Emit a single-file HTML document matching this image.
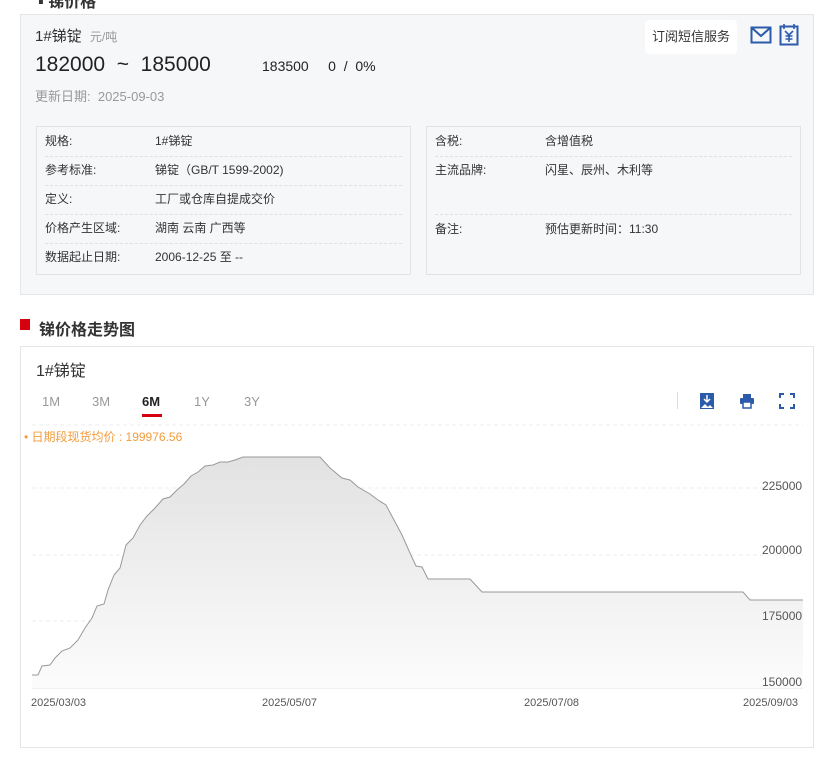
<!DOCTYPE html>
<html><head><meta charset="utf-8"><style>
body{margin:0;width:822px;height:759px;background:#fff;font-family:"Liberation Sans","Noto Sans CJK SC",sans-serif;position:relative;overflow:hidden;color:#333}
.a{position:absolute;white-space:nowrap}
.box1{position:absolute;left:20px;top:14px;width:794px;height:281px;background:#f6f7f9;border:1px solid #e5e5e5;box-sizing:border-box}
.tb{position:absolute;background:#f6f7f9;border:1px solid #e3e3e3;box-sizing:border-box}
.row{position:absolute;left:8px;right:8px;height:29px;border-bottom:1px dashed #e0e0e0;font-size:12px;line-height:29px}
.row span{position:absolute}
.box2{position:absolute;left:20px;top:346px;width:794px;height:402px;border:1px solid #e5e5e5;box-sizing:border-box;background:#fff}
</style></head><body>
<div class="a" style="left:38px;top:-12px;font-size:16px;font-weight:bold">▪ 锑价格</div>
<div class="box1">
 <div class="a" style="left:14px;top:10px;font-size:15px;color:#333">1#锑锭 <span style="font-size:12px;color:#999;margin-left:4px">元/吨</span></div>
 <div class="a" style="left:14px;top:38px;font-size:21px;color:#222">182000 &nbsp;~&nbsp; 185000</div>
 <div class="a" style="left:241px;top:43px;font-size:14px;color:#222">183500 &nbsp;&nbsp;&nbsp; 0 &nbsp;/&nbsp; 0%</div>
 <div class="a" style="left:14px;top:71px;font-size:13px;color:#999">更新日期: &nbsp;2025-09-03</div>
 <div class="a" style="left:624px;top:5px;width:92px;height:34px;background:#fff;border-radius:4px;font-size:13px;line-height:34px;text-align:center;color:#333">订阅短信服务</div>
 <svg class="a" style="left:729px;top:10px" width="22" height="20"><rect x="1.5" y="2.5" width="19" height="15" fill="none" stroke="#2c5bab" stroke-width="2"/><path d="M2 3l9 8 9-8" fill="none" stroke="#2c5bab" stroke-width="2"/></svg>
 <svg class="a" style="left:758px;top:8px" width="20" height="24"><rect x="1.5" y="3.5" width="17" height="18" fill="none" stroke="#2c5bab" stroke-width="2"/><path d="M5 1v5M15 1v5M6 8l4 4 4-4M10 12v7M6.5 13h7M6.5 16h7" stroke="#2c5bab" stroke-width="1.6" fill="none"/></svg>
 <div class="tb" style="left:15px;top:111px;width:375px;height:149px">
  <div class="row" style="top:0"><span style="left:0">规格:</span><span style="left:110px">1#锑锭</span></div>
  <div class="row" style="top:29px"><span style="left:0">参考标准:</span><span style="left:110px">锑锭（GB/T 1599-2002)</span></div>
  <div class="row" style="top:58px"><span style="left:0">定义:</span><span style="left:110px">工厂或仓库自提成交价</span></div>
  <div class="row" style="top:87px"><span style="left:0">价格产生区域:</span><span style="left:110px">湖南 云南 广西等</span></div>
  <div class="row" style="top:116px;border:none"><span style="left:0">数据起止日期:</span><span style="left:110px">2006-12-25 至 --</span></div>
 </div>
 <div class="tb" style="left:405px;top:111px;width:375px;height:149px">
  <div class="row" style="top:0"><span style="left:0">含税:</span><span style="left:110px">含增值税</span></div>
  <div class="row" style="top:29px;height:58px"><span style="left:0">主流品牌:</span><span style="left:110px">闪星、辰州、木利等</span></div>
  <div class="row" style="top:88px;border:none"><span style="left:0">备注:</span><span style="left:110px">预估更新时间：11:30</span></div>
 </div>
</div>
<div class="a" style="left:20px;top:319px;width:10px;height:11px;background:#d7000f"></div>
<div class="a" style="left:39px;top:316px;font-size:16px;font-weight:bold;color:#333">锑价格走势图</div>
<div class="box2">
 <div class="a" style="left:15px;top:10px;font-size:16px;color:#333">1#锑锭</div>
 <div class="a" style="left:21px;top:47px;font-size:13px;color:#999">1M</div>
 <div class="a" style="left:71px;top:47px;font-size:13px;color:#999">3M</div>
 <div class="a" style="left:121px;top:47px;font-size:13px;color:#222;font-weight:bold">6M</div>
 <div class="a" style="left:121px;top:67px;width:20px;height:3px;background:#d7000f"></div>
 <div class="a" style="left:173px;top:47px;font-size:13px;color:#999">1Y</div>
 <div class="a" style="left:223px;top:47px;font-size:13px;color:#999">3Y</div>
 <div class="a" style="left:656px;top:45px;width:1px;height:17px;background:#ddd"></div>
 <svg class="a" style="left:679px;top:46px" width="14" height="16"><rect x="0" y="0" width="14" height="16" fill="#2c5bab"/><path d="M7 2v7M4 6l3 3 3-3" stroke="#fff" stroke-width="1.5" fill="none"/><path d="M1 15l4-4 3 3 2-2 3 3z" fill="#fff"/></svg>
 <svg class="a" style="left:718px;top:46px" width="16" height="16"><rect x="4" y="1" width="8" height="4" fill="#2c5bab"/><rect x="1" y="5" width="14" height="6" rx="1" fill="#2c5bab"/><rect x="4" y="9" width="8" height="6" fill="#fff" stroke="#2c5bab" stroke-width="1.5"/></svg>
 <svg class="a" style="left:758px;top:46px" width="16" height="16"><path d="M1 5V1h4M11 1h4v4M15 11v4h-4M5 15H1v-4" stroke="#2c5bab" stroke-width="2" fill="none"/></svg>
</div>
<svg class="a" style="left:0;top:420px" width="822" height="300">
 <defs><linearGradient id="g" x1="0" y1="0" x2="0" y2="1"><stop offset="0" stop-color="#e2e2e2"/><stop offset="1" stop-color="#fcfcfc"/></linearGradient></defs>
 <g stroke="#ececec" stroke-dasharray="4 3"><line x1="32" y1="5" x2="803" y2="5"/><line x1="32" y1="68" x2="803" y2="68"/><line x1="32" y1="135" x2="803" y2="135"/><line x1="32" y1="201" x2="803" y2="201"/></g>
 <line x1="32" y1="268" x2="803" y2="268" stroke="#e0e0e0"/>
 <g transform="translate(0,-420)">
 <path d="M32 675L38 675L42 666L50 665L55 658L62 651L70 648L78 640L85 628L92 618L97 606L104 604L108 590L114 575L120 568L126 545L133 538L140 525L147 516L155 508L163 499L170 497L177 490L184 484L191 476L198 472L205 466L213 465L220 462L228 462L235 460L243 457L320 457L330 468L342 478L350 480L358 487L370 494L378 500L386 505L394 520L402 535L410 553L416 566L422 567L428 579L470 579L482 592L743 592L750 600L803 600L803 688L32 688Z" fill="url(#g)"/>
 <path d="M32 675L38 675L42 666L50 665L55 658L62 651L70 648L78 640L85 628L92 618L97 606L104 604L108 590L114 575L120 568L126 545L133 538L140 525L147 516L155 508L163 499L170 497L177 490L184 484L191 476L198 472L205 466L213 465L220 462L228 462L235 460L243 457L320 457L330 468L342 478L350 480L358 487L370 494L378 500L386 505L394 520L402 535L410 553L416 566L422 567L428 579L470 579L482 592L743 592L750 600L803 600" fill="none" stroke="#999" stroke-width="1"/>
 </g>
</svg>
<div class="a" style="left:24px;top:428px;font-size:12px;color:#f39c3c">• 日期段现货均价 : 199976.56</div>
<div class="a" style="left:762px;top:479px;font-size:12px;color:#555">225000</div>
<div class="a" style="left:762px;top:543px;font-size:12px;color:#555">200000</div>
<div class="a" style="left:762px;top:609px;font-size:12px;color:#555">175000</div>
<div class="a" style="left:762px;top:675px;font-size:12px;color:#555">150000</div>
<div class="a" style="left:31px;top:697px;font-size:11px;color:#555">2025/03/03</div>
<div class="a" style="left:262px;top:697px;font-size:11px;color:#555">2025/05/07</div>
<div class="a" style="left:524px;top:697px;font-size:11px;color:#555">2025/07/08</div>
<div class="a" style="left:743px;top:697px;font-size:11px;color:#555">2025/09/03</div>
</body></html>
